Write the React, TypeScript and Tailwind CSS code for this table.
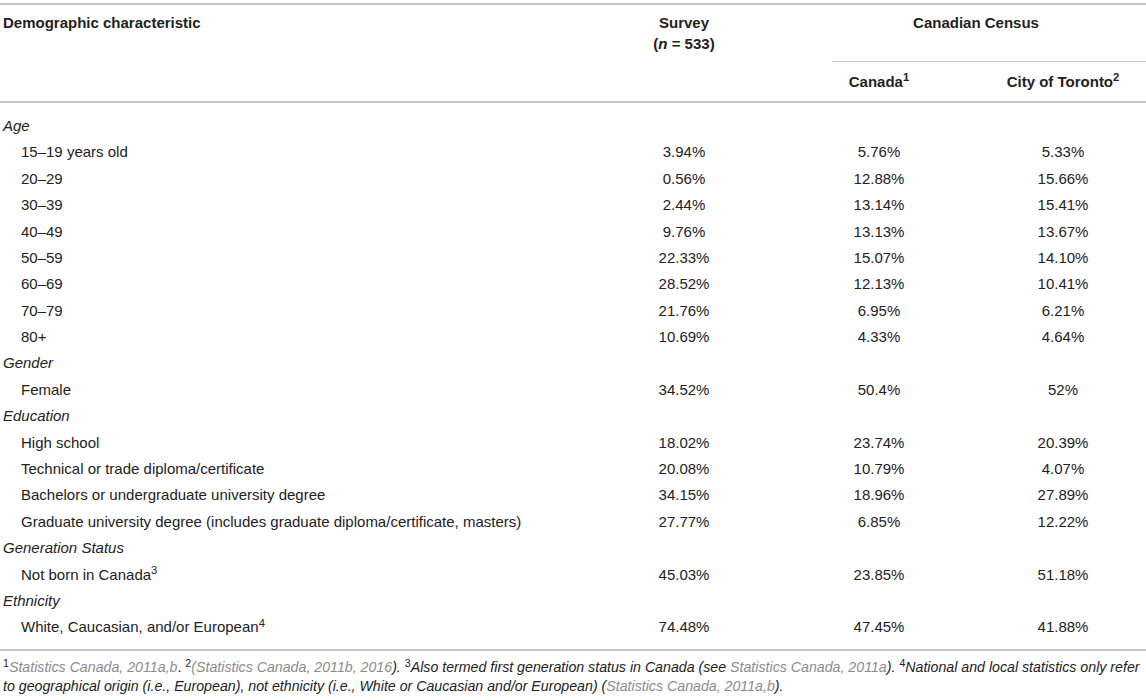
import React from 'react';

type Row = { label: React.ReactNode; survey: string; canada: string; toronto: string };
type Group = { title: string; rows: Row[] };

const GROUPS: Group[] = [
  {
    title: 'Age',
    rows: [
      { label: '15–19 years old', survey: '3.94%', canada: '5.76%', toronto: '5.33%' },
      { label: '20–29', survey: '0.56%', canada: '12.88%', toronto: '15.66%' },
      { label: '30–39', survey: '2.44%', canada: '13.14%', toronto: '15.41%' },
      { label: '40–49', survey: '9.76%', canada: '13.13%', toronto: '13.67%' },
      { label: '50–59', survey: '22.33%', canada: '15.07%', toronto: '14.10%' },
      { label: '60–69', survey: '28.52%', canada: '12.13%', toronto: '10.41%' },
      { label: '70–79', survey: '21.76%', canada: '6.95%', toronto: '6.21%' },
      { label: '80+', survey: '10.69%', canada: '4.33%', toronto: '4.64%' },
    ],
  },
  {
    title: 'Gender',
    rows: [{ label: 'Female', survey: '34.52%', canada: '50.4%', toronto: '52%' }],
  },
  {
    title: 'Education',
    rows: [
      { label: 'High school', survey: '18.02%', canada: '23.74%', toronto: '20.39%' },
      { label: 'Technical or trade diploma/certificate', survey: '20.08%', canada: '10.79%', toronto: '4.07%' },
      { label: 'Bachelors or undergraduate university degree', survey: '34.15%', canada: '18.96%', toronto: '27.89%' },
      {
        label: 'Graduate university degree (includes graduate diploma/certificate, masters)',
        survey: '27.77%',
        canada: '6.85%',
        toronto: '12.22%',
      },
    ],
  },
  {
    title: 'Generation Status',
    rows: [
      {
        label: (
          <>
            Not born in Canada<sup>3</sup>
          </>
        ),
        survey: '45.03%',
        canada: '23.85%',
        toronto: '51.18%',
      },
    ],
  },
  {
    title: 'Ethnicity',
    rows: [
      {
        label: (
          <>
            White, Caucasian, and/or European<sup>4</sup>
          </>
        ),
        survey: '74.48%',
        canada: '47.45%',
        toronto: '41.88%',
      },
    ],
  },
];

const COLS = 'grid grid-cols-[590px_188px_202px_166px]';

function Ref({ children }: { children: React.ReactNode }) {
  return <span className="text-[#8c8c8c]">{children}</span>;
}

export default function App() {
  return (
    <div className="w-[1146px] h-[700px] bg-white pt-[3px] font-['Liberation_Sans',Arial,sans-serif] text-[15px] text-[#222]">
      {/* header */}
      <div className={`${COLS} border-t-2 border-b-2 border-[#c6c6c6] font-bold leading-[21px]`}>
        <div className="row-span-2 pl-[3px] pt-[7px]">Demographic characteristic</div>
        <div className="row-span-2 pt-[7px] text-center">
          Survey
          <br />(<i>n</i> = 533)
        </div>
        <div className="col-span-2 flex h-[57px] flex-col">
          <div className="pl-[28px] pt-[7px] text-center">Canadian Census</div>
          <div className="mt-auto ml-[54px] border-b border-[#c6c6c6]" />
        </div>
        <div className="pt-[9px] pb-[9px] text-center">
          Canada<sup>1</sup>
        </div>
        <div className="pt-[9px] pb-[9px] text-center">
          City of Toronto<sup>2</sup>
        </div>
      </div>

      {/* body */}
      <div className="border-b-2 border-[#c6c6c6] pt-[10px] pb-[8px]">
        {GROUPS.map((g) => (
          <React.Fragment key={g.title}>
            <div className={`${COLS} h-[26.4px] items-center`}>
              <div className="pl-[3px] italic">{g.title}</div>
            </div>
            {g.rows.map((r, i) => (
              <div key={i} className={`${COLS} h-[26.4px] items-center`}>
                <div className="pl-[21px] whitespace-nowrap">{r.label}</div>
                <div className="text-center">{r.survey}</div>
                <div className="text-center">{r.canada}</div>
                <div className="text-center">{r.toronto}</div>
              </div>
            ))}
          </React.Fragment>
        ))}
      </div>

      {/* footnotes */}
      <p className="pl-[3px] pt-[7px] text-[14.2px] leading-[19px] whitespace-nowrap">
        <sup>1</sup>
        <i>
          <Ref>Statistics Canada, 2011a,b</Ref>
        </i>
        . <sup>2</sup>
        <i>
          <Ref>(Statistics Canada, 2011b, 2016</Ref>).
        </i>{' '}
        <sup>3</sup>
        <i>
          Also termed first generation status in Canada (see <Ref>Statistics Canada, 2011a</Ref>).
        </i>{' '}
        <sup>4</sup>
        <i>
          National and local statistics only refer
          <br />
          to geographical origin (i.e., European), not ethnicity (i.e., White or Caucasian and/or European) (
          <Ref>Statistics Canada, 2011a,b</Ref>).
        </i>
      </p>
    </div>
  );
}
